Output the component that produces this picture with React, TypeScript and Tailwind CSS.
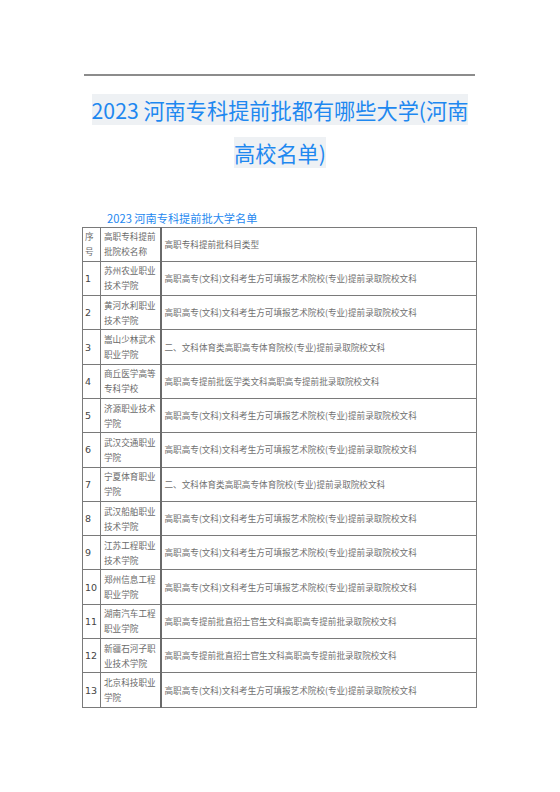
const typeA = "高职高专(文科)文科考生方可填报艺术院校(专业)提前录取院校文科"
const typeB = "二、文科体育类高职高专体育院校(专业)提前录取院校文科"
const typeC = "高职高专提前批医学类文科高职高专提前批录取院校文科"
const typeD = "高职高专提前批直招士官生文科高职高专提前批录取院校文科"

const schools = [
  { id: 1, name: "苏州农业职业技术学院", type: typeA },
  { id: 2, name: "黄河水利职业技术学院", type: typeA },
  { id: 3, name: "嵩山少林武术职业学院", type: typeB },
  { id: 4, name: "商丘医学高等专科学校", type: typeC },
  { id: 5, name: "济源职业技术学院", type: typeA },
  { id: 6, name: "武汉交通职业学院", type: typeA },
  { id: 7, name: "宁夏体育职业学院", type: typeB },
  { id: 8, name: "武汉船舶职业技术学院", type: typeA },
  { id: 9, name: "江苏工程职业技术学院", type: typeA },
  { id: 10, name: "郑州信息工程职业学院", type: typeA },
  { id: 11, name: "湖南汽车工程职业学院", type: typeD },
  { id: 12, name: "新疆石河子职业技术学院", type: typeD },
  { id: 13, name: "北京科技职业学院", type: typeA },
]

const cjk = "font-['Noto_Sans_CJK_SC',sans-serif]"

export default function App() {
  return (
    <div className={`w-[560px] h-[792px] bg-white ${cjk}`}>
      <div className="pt-[74px]">
        <div className="ml-[84px] w-[391px] h-[1.5px] bg-[#8c8c8c]" />
      </div>

      <h1 className="mt-[12px] text-center text-[21.2px] leading-[43px] font-normal text-[#1e88f0]">
        <span className="bg-[#eef1f4] box-decoration-clone">
          2023 河南专科提前批都有哪些大学(河南
          <br />
          高校名单)
        </span>
      </h1>

      <p className="mt-[37px] ml-[107px] text-[11.2px] leading-[14px] text-[#1e88f0]">2023 河南专科提前批大学名单</p>

      <table className="mt-[2px] ml-[82px] w-[395px] table-fixed border-collapse border border-[#7a7a7a] text-[8.6px] leading-[15px] text-[#6a6a6a]">
        <colgroup>
          <col className="w-[18px]" />
          <col className="w-[60px]" />
          <col />
        </colgroup>
        <tbody>
          <tr className="h-[34.3px]">
            <td className="border border-[#7a7a7a] px-[2px] align-middle">
              序
              <br />号
            </td>
            <td className="border border-[#7a7a7a] border-r-2 border-r-[#6a6a6a] px-[3px] align-middle">高职专科提前批院校名称</td>
            <td className="border border-[#7a7a7a] px-[3px] align-middle">高职专科提前批科目类型</td>
          </tr>
          {schools.map((s) => (
            <tr key={s.id} className="h-[34.3px]">
              <td className="border border-[#7a7a7a] px-[2px] align-middle font-['DejaVu_Sans',sans-serif] text-[9.5px] text-[#444]">
                {s.id}
              </td>
              <td className="border border-[#7a7a7a] border-r-2 border-r-[#6a6a6a] px-[3px] align-middle">{s.name}</td>
              <td className="border border-[#7a7a7a] px-[3px] align-middle text-[#707070]">{s.type}</td>
            </tr>
          ))}
        </tbody>
      </table>
    </div>
  )
}
